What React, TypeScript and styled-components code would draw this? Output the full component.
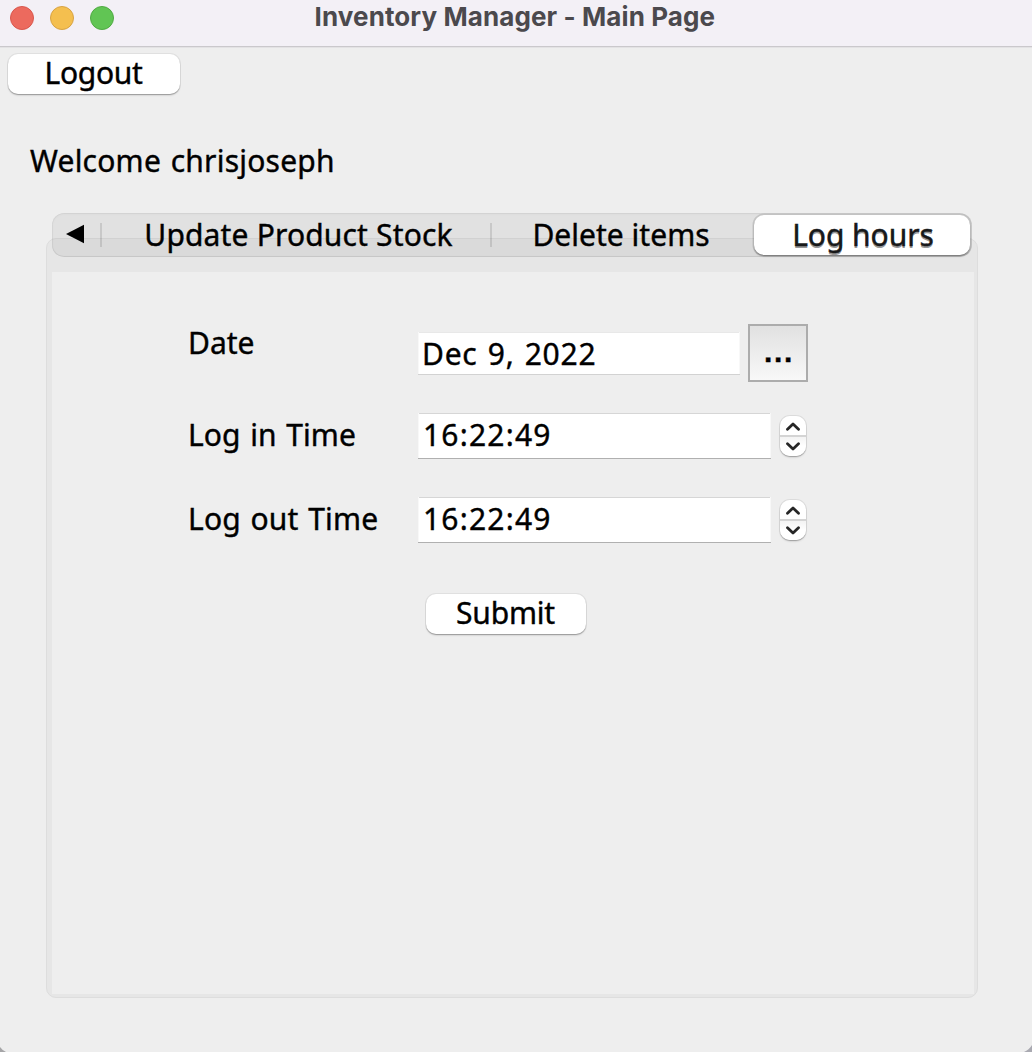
import React, { useState } from 'react';
import styled, { createGlobalStyle } from 'styled-components';

const GlobalStyle = createGlobalStyle`
  *, *::before, *::after { box-sizing: border-box; }
  body { margin: 0; background: #ededed; overflow: hidden; }
  button, input { font: inherit; color: inherit; margin: 0; }
`;

const Window = styled.main`
  position: relative;
  display: flex;
  flex-direction: column;
  width: 1032px;
  height: 1052px;
  overflow: hidden;
  background: #eeeeee;
  color: #000;
  font: 400 30px/40px 'Noto Sans', 'Open Sans', sans-serif;
  word-spacing: 1.7px;
`;

const TitleBar = styled.header`
  display: grid;
  grid-template-columns: 314px auto 1fr;
  height: 48px;
  background: #f3f0f6;
  border-bottom: 1px solid #e3e2e4;
  box-shadow: inset 0 -1px 0 #cac8cc;
`;

const Lights = styled.div`
  display: flex;
  gap: 16px;
  padding: 6px 10px;
`;

const Light = styled.span<{ $fill: string; $rim: string }>`
  width: 24px;
  height: 24px;
  border-radius: 50%;
  background: ${(p) => p.$fill};
  border: 1px solid ${(p) => p.$rim};
`;

const Title = styled.h1`
  margin: 0 0 0 0.6px;
  font: 700 26px/33px Inter, sans-serif;
  letter-spacing: 0.1px;
  word-spacing: 0;
  color: #4b494d;
  white-space: nowrap;
`;

const Tracked = styled.span<{ $track?: number }>`
  letter-spacing: ${(p) => p.$track ?? 0}px;
  white-space: pre;
  -webkit-text-stroke: 0.4px currentColor;
`;

const Toolbar = styled.div`
  display: flex;
  padding: 6px 8px 0;
`;

const PushButton = styled.button<{ $width: number }>`
  display: flex;
  align-items: center;
  justify-content: center;
  width: ${(p) => p.$width}px;
  height: 40px;
  padding: 0 1px 2px 0;
  border: 0;
  border-radius: 10px;
  background: #fff;
  box-shadow: 0 0 0 1px rgba(0, 0, 0, 0.06), 0 1px 1px rgba(0, 0, 0, 0.25), 0 2px 2px rgba(0, 0, 0, 0.07);
`;

const Welcome = styled.p`
  margin: 47px 0 0 30px;
`;

const TabbedPane = styled.section`
  display: flex;
  flex-direction: column;
  margin: 32px 54px 0 46px;
`;

const TabStrip = styled.div`
  position: relative;
  z-index: 1;
  display: flex;
  align-items: center;
  height: 44px;
  margin: 0 6px;
  border-radius: 12px;
  background: rgba(0, 0, 0, 0.05);
  box-shadow: inset 0 0 0 1px rgba(0, 0, 0, 0.035), inset 0 1px 3px rgba(0, 0, 0, 0.04), inset 0 -1px 1px rgba(0, 0, 0, 0.05);
`;

const ScrollTabs = styled.button`
  display: flex;
  align-items: center;
  width: 48px;
  height: 44px;
  padding: 0 0 2px 14px;
  border: 0;
  background: none;
`;

const TabDivider = styled.span`
  width: 2px;
  height: 24px;
  margin-bottom: 1px;
  background: rgba(0, 0, 0, 0.11);
`;

const Tab = styled.button<{ $width: number; $active?: boolean; $left?: number; $right?: number }>`
  display: flex;
  align-items: center;
  justify-content: center;
  width: ${(p) => p.$width}px;
  height: 40px;
  padding: 0 ${(p) => p.$right ?? 0}px ${(p) => (p.$active ? 1 : 0)}px ${(p) => p.$left ?? 0}px;
  border: 0;
  border-radius: 10px;
  background: ${(p) => (p.$active ? '#fff' : 'transparent')};
  color: ${(p) => (p.$active ? '#18191a' : '#000')};
  text-shadow: ${(p) => (p.$active ? '0 2px 0 rgba(0, 0, 0, 0.42)' : 'none')};
  box-shadow: ${(p) =>
    p.$active ? '0 0 0 1.5px rgba(0, 0, 0, 0.12), 0 1px 1px rgba(0, 0, 0, 0.28), 0 2px 2px rgba(0, 0, 0, 0.1)' : 'none'};
`;

const Pane = styled.div`
  height: 760px;
  margin-top: -19px;
  padding: 33px 3px 3px 5px;
  border: 1px solid #dddddd;
  border-radius: 10px;
  background: #e6e6e6;
`;

const Form = styled.form`
  display: flex;
  flex-direction: column;
  height: 100%;
  padding: 52px 0 0 136px;
  background: #eeeeee;
`;

const Row = styled.div<{ $height: number; $gap: number }>`
  display: grid;
  grid-template-columns: 230px auto auto 1fr;
  align-items: center;
  height: ${(p) => p.$height}px;
  margin-bottom: ${(p) => p.$gap}px;
`;

const Label = styled.label<{ $top?: boolean }>`
  align-self: ${(p) => (p.$top ? 'start' : 'center')};
  line-height: ${(p) => (p.$top ? 37 : 40)}px;
  margin-bottom: ${(p) => (p.$top ? 0 : 2)}px;
`;

const Field = styled.input<{ $width: number; $height: number; $track: number; $inset: number; $raised?: boolean }>`
  width: ${(p) => p.$width}px;
  height: ${(p) => p.$height}px;
  margin-bottom: ${(p) => (p.$raised ? 1 : 0)}px;
  padding: 0 0 ${(p) => (p.$raised ? 2 : 0)}px ${(p) => p.$inset}px;
  border: 0;
  outline: 0;
  border-radius: 0;
  background: #fff;
  letter-spacing: ${(p) => p.$track}px;
  word-spacing: 1.7px;
  -webkit-text-stroke: 0.4px currentColor;
  box-shadow: ${(p) =>
    p.$raised
      ? 'inset 1px 0 0 #f8f8f8, inset -1px 0 0 #f8f8f8, inset 0 1px 0 #d6d6d6, 0 1px 0 #b0b0b0'
      : 'inset 1px 0 0 #f8f8f8, inset -1px 0 0 #f8f8f8, inset 0 1px 0 #e8e8e8, 0 1px 0 #d2d2d2'};
`;

const PickerButton = styled.button`
  display: flex;
  align-items: center;
  justify-content: center;
  width: 60px;
  height: 58px;
  margin-left: 8px;
  padding: 0 0 2px 2px;
  border: 2px solid #acacac;
  background: linear-gradient(#e1e1e1, #f8f8f8);
  font-family: 'Liberation Sans', sans-serif;
  font-weight: 700;
`;

const StepperFrame = styled.div`
  width: 26px;
  height: 40px;
  margin-left: 9px;
  border-radius: 10px;
  box-shadow: 0 0 0 1px rgba(0, 0, 0, 0.08), 0 1px 1px rgba(0, 0, 0, 0.2), 0 2px 2px rgba(0, 0, 0, 0.08);
`;

const Stepper = styled.div`
  display: flex;
  flex-direction: column;
  overflow: hidden;
  border-radius: 10px;
`;

const Step = styled.button<{ $down?: boolean }>`
  display: flex;
  align-items: center;
  justify-content: center;
  height: ${(p) => (p.$down ? 21 : 19)}px;
  padding: ${(p) => (p.$down ? '0 0 1px' : '1px 0 0')};
  border: 0;
  border-top: ${(p) => (p.$down ? '2px solid #d4d4d4' : '0')};
  background: ${(p) => (p.$down ? 'linear-gradient(#f3f3f3, #fff 50%)' : '#fff')};
`;

const SubmitRow = styled.div`
  display: flex;
  padding-left: 238px;
`;

const CornerLeft = styled.svg`
  position: absolute;
  left: 0;
  bottom: 0;
`;

const CornerRight = styled.svg`
  position: absolute;
  right: 0;
  bottom: 0;
`;

const Chevron = ({ down }: { down?: boolean }) => (
  <svg width="14" height="9" viewBox="0 0 14 9" fill="none" stroke="#262626" strokeWidth="2.8" strokeLinecap="round" strokeLinejoin="round">
    <path d={down ? 'M1.5 1.8 7 7l5.5-5.2' : 'M1.5 7.2 7 2l5.5 5.2'} />
  </svg>
);

const TimeRow = ({ label, track, gap }: { label: string; track: number; gap: number }) => {
  const [time, setTime] = useState('16:22:49');
  return (
    <Row $height={46} $gap={gap}>
      <Label>
        <Tracked $track={track}>{label}</Tracked>
      </Label>
      <Field
        $width={353}
        $height={45}
        $track={1.2}
        $inset={5}
        $raised
        aria-label={label}
        value={time}
        onChange={(e) => setTime(e.target.value)}
      />
      <StepperFrame>
        <Stepper>
          <Step type="button" aria-label="Increase">
            <Chevron />
          </Step>
          <Step type="button" $down aria-label="Decrease">
            <Chevron down />
          </Step>
        </Stepper>
      </StepperFrame>
    </Row>
  );
};

export default function App() {
  const [date, setDate] = useState('Dec 9, 2022');
  return (
    <Window>
      <GlobalStyle />
      <TitleBar>
        <Lights>
          <Light $fill="#ec6a5e" $rim="#d9574d" />
          <Light $fill="#f4bf4f" $rim="#d8a344" />
          <Light $fill="#61c554" $rim="#50aa43" />
        </Lights>
        <Title>Inventory Manager - Main Page</Title>
      </TitleBar>
      <Toolbar>
        <PushButton $width={172}>
          <Tracked $track={-0.3}>Logout</Tracked>
        </PushButton>
      </Toolbar>
      <Welcome>
        <Tracked $track={0.22}>Welcome chrisjoseph</Tracked>
      </Welcome>
      <TabbedPane>
        <TabStrip>
          <ScrollTabs aria-label="Previous tabs">
            <svg width="18" height="20" viewBox="0 0 18 20">
              <path d="M0 10 18 .8v18.4z" fill="#000" />
            </svg>
          </ScrollTabs>
          <TabDivider />
          <Tab $width={388} $left={5}>
            <Tracked $track={0.16}>Update Product Stock</Tracked>
          </Tab>
          <TabDivider />
          <Tab $width={262} $right={4}>
            <Tracked $track={0.02}>Delete items</Tracked>
          </Tab>
          <Tab $width={216} $active $left={2}>
            <Tracked $track={-0.05}>Log hours</Tracked>
          </Tab>
        </TabStrip>
        <Pane>
          <Form onSubmit={(e) => e.preventDefault()}>
            <Row $height={58} $gap={31}>
              <Label $top>
                <Tracked>Date</Tracked>
              </Label>
              <Field
                $width={322}
                $height={42}
                $track={0.75}
                $inset={4}
                aria-label="Date"
                value={date}
                onChange={(e) => setDate(e.target.value)}
              />
              <PickerButton type="button">
                <Tracked $track={1.7}>...</Tracked>
              </PickerButton>
            </Row>
            <TimeRow label="Log in Time" track={0.09} gap={38} />
            <TimeRow label="Log out Time" track={0.17} gap={51} />
            <SubmitRow>
              <PushButton $width={160}>
                <Tracked $track={-0.2}>Submit</Tracked>
              </PushButton>
            </SubmitRow>
          </Form>
        </Pane>
      </TabbedPane>
      <CornerLeft width="6" height="5" viewBox="0 0 6 5">
        <path d="M0 0v5h6Q2.5 3.5 0 0z" fill="#a5a5a7" />
      </CornerLeft>
      <CornerRight width="8" height="7" viewBox="0 0 8 7">
        <path d="M8 0v7H0Q5 5 8 0z" fill="#a9a9b1" />
      </CornerRight>
    </Window>
  );
}
